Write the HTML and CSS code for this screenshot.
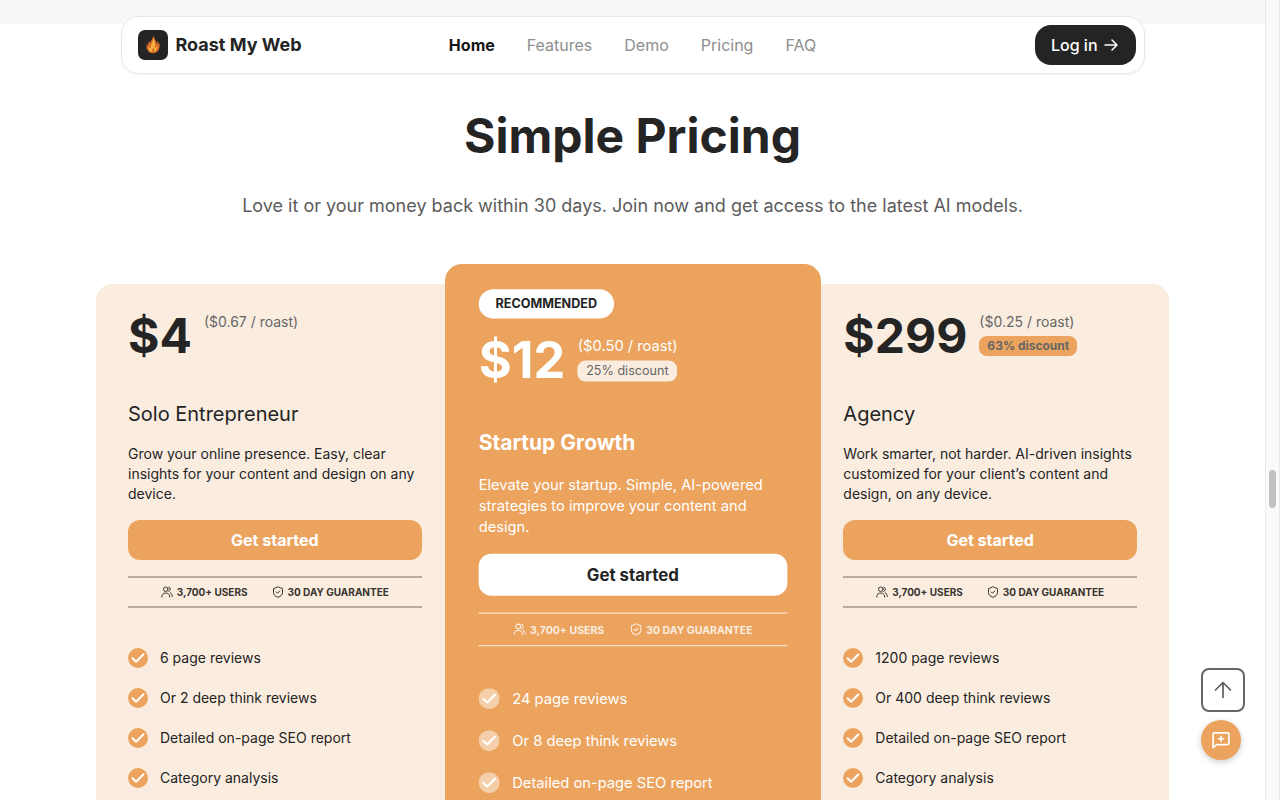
FILE: index.html
```html
<!DOCTYPE html>
<html lang="en">
<head>
<meta charset="utf-8">
<meta name="viewport" content="width=device-width, initial-scale=1">
<title>Roast My Web</title>
<link rel="stylesheet" href="styles.css">
</head>
<body>
<svg class="defs" aria-hidden="true">
  <symbol id="users" viewBox="0 0 24 24"><circle cx="9.500" cy="6.500" r="4.500"/><path d="M1.500 22c0-5 3.300-8 8-8s8 3 8 8M15.500 2.200a4.500 4.500 0 0 1 0 8.600M18.500 13.500c2.600 1.200 4 4 4 7.500"/></symbol>
  <symbol id="shield" viewBox="0 0 24 24"><path d="M21 13c0 5-3.500 7.500-8.700 9.500a1 1 0 0 1-.6 0C6.500 20.500 3 18 3 13V5.500a1 1 0 0 1 1-1c2.500 0 5-1.200 7.200-2.900a1.200 1.200 0 0 1 1.600 0C15 3.300 17.500 4.500 20 4.500a1 1 0 0 1 1 1z"/><path d="m8.500 12 2.500 2.500 4.500-4.500"/></symbol>
  <symbol id="check" viewBox="0 0 20 20"><circle class="disc" cx="10" cy="10" r="10"/><path class="tick" d="m4.500 10.200 3.600 3.500 7.400-7.500"/></symbol>
</svg>
<div class="page">
  <div class="band"></div>
  <header class="header">
    <a class="brand" href="#">
      <svg class="logo" viewBox="0 0 30 30" aria-hidden="true">
        <rect width="30" height="30" rx="7" fill="#242424"/>
        <path fill="#d9692b" d="M15.500 5.500c.5 3.200 3.100 5 2.900 8.600.7-.9.9-2 .6-3.400 1.300 1 1.700 2.300 1.700 3.600.5-.3.7-.8.8-1.400.9 5.500-1.500 10.300-6.500 10.300-4.800 0-7.300-4.200-6.300-9.300.4.900.8 1.300 1.400 1.500-.2-1.800.1-3.100 1.100-4.400.1 1.100.4 1.800 1 2.200.3-2.800 2.700-4.600 3.300-7.700z"/>
        <path fill="#f4b23f" d="M15.500 7.500c.1 3.100 2.100 4.300 1.600 7.500l-.5 3c1.300-.5 2.200-1.300 2.700-2.700.5 3.100-.9 5.900-3.600 6.700.7-1.700.5-3-.4-4.400-.2 1.600-1.700 2.400-1.400 4.500-2.500-.7-3.800-2.900-3.200-5.800.5 1.200 1.200 1.800 2.200 2.100-.7-4.500 2.500-6.100 2.600-10.900z"/>
      </svg>
      <span>Roast My Web</span>
    </a>
    <nav class="nav">
      <a class="active" href="#">Home</a>
      <a href="#features">Features</a>
      <a href="#demo">Demo</a>
      <a href="#pricing">Pricing</a>
      <a href="#faq">FAQ</a>
    </nav>
    <button class="login" type="button">Log in
      <svg class="line" viewBox="0 0 16 16" aria-hidden="true"><path d="M2 8h12M9 3l5 5-5 5"/></svg>
    </button>
  </header>

  <main class="pricing" id="pricing">
    <h1>Simple Pricing</h1>
    <p class="lead">Love it or your money back within 30 days. Join now and get access to the latest AI models.</p>
    <div class="plans">
      <section class="plan first">
        <div class="price"><strong>$4</strong><div class="rate"><span>($0.67 / roast)</span></div></div>
        <h2>Solo Entrepreneur</h2>
        <p class="about">Grow your online presence. Easy, clear insights for your content and design on any device.</p>
        <button class="start" type="button">Get started</button>
        <div class="trust">
          <span><svg class="line"><use href="#users"/></svg>3,700+ USERS</span>
          <span><svg class="line"><use href="#shield"/></svg>30 DAY GUARANTEE</span>
        </div>
        <ul class="features">
          <li><svg><use href="#check"/></svg>6 page reviews</li>
          <li><svg><use href="#check"/></svg>Or 2 deep think reviews</li>
          <li><svg><use href="#check"/></svg>Detailed on-page SEO report</li>
          <li><svg><use href="#check"/></svg>Category analysis</li>
        </ul>
      </section>

      <section class="plan featured">
        <span class="badge">RECOMMENDED</span>
        <div class="price"><strong>$12</strong><div class="rate"><span>($0.50 / roast)</span><span class="discount">25% discount</span></div></div>
        <h2>Startup Growth</h2>
        <p class="about">Elevate your startup. Simple, AI-powered strategies to improve your content and design.</p>
        <button class="start" type="button">Get started</button>
        <div class="trust">
          <span><svg class="line"><use href="#users"/></svg>3,700+ USERS</span>
          <span><svg class="line"><use href="#shield"/></svg>30 DAY GUARANTEE</span>
        </div>
        <ul class="features">
          <li><svg><use href="#check"/></svg>24 page reviews</li>
          <li><svg><use href="#check"/></svg>Or 8 deep think reviews</li>
          <li><svg><use href="#check"/></svg>Detailed on-page SEO report</li>
        </ul>
      </section>

      <section class="plan last">
        <div class="price"><strong>$299</strong><div class="rate"><span>($0.25 / roast)</span><span class="discount">63% discount</span></div></div>
        <h2>Agency</h2>
        <p class="about">Work smarter, not harder. AI-driven insights customized for your client’s content and design, on any device.</p>
        <button class="start" type="button">Get started</button>
        <div class="trust">
          <span><svg class="line"><use href="#users"/></svg>3,700+ USERS</span>
          <span><svg class="line"><use href="#shield"/></svg>30 DAY GUARANTEE</span>
        </div>
        <ul class="features">
          <li><svg><use href="#check"/></svg>1200 page reviews</li>
          <li><svg><use href="#check"/></svg>Or 400 deep think reviews</li>
          <li><svg><use href="#check"/></svg>Detailed on-page SEO report</li>
          <li><svg><use href="#check"/></svg>Category analysis</li>
        </ul>
      </section>
    </div>
  </main>

  <div class="floating">
    <button class="to-top" type="button" aria-label="Back to top"><svg class="line" viewBox="0 0 24 24"><path d="M12 21V3M3 12l9-9 9 9"/></svg></button>
    <button class="feedback" type="button" aria-label="Send feedback"><svg class="line" viewBox="0 0 24 24"><path d="M21.500 16a1.500 1.500 0 0 1-1.500 1.500H7L2.500 21V5A1.500 1.500 0 0 1 4 3.500h16A1.500 1.500 0 0 1 21.500 5zM12 7.500v6M9 10.500h6"/></svg></button>
  </div>
</div>
<div class="scrollbar" aria-hidden="true"><div class="thumb"></div></div>
</body>
</html>
```
FILE: styles.css
```css
* { box-sizing: border-box; }

body {
  margin: 0;
  height: 100vh;
  display: grid;
  grid-template-columns: minmax(0, 1fr) 15px;
  overflow: hidden;
  background: #fff;
  color: #242424;
  font-family: Inter, "Liberation Sans", sans-serif;
  font-size: 14px;
  line-height: 20px;
}

h1, h2, p, ul { margin: 0; padding: 0; }
a { color: inherit; text-decoration: none; }
button { border: 0; padding: 0; font: inherit; cursor: pointer; }
.defs { position: absolute; width: 0; height: 0; }
.line { fill: none; stroke: currentColor; stroke-width: 2; stroke-linecap: round; stroke-linejoin: round; }

.page {
  position: relative;
  display: flex;
  flex-direction: column;
  height: 100vh;
  overflow: hidden;
}
.band { flex: none; height: 24px; background: #f7f7f7; }

.header {
  position: absolute;
  top: 16px;
  left: 0;
  right: 0;
  z-index: 3;
  width: calc(100% - 32px);
  max-width: 1024px;
  margin: 0 auto;
  padding: 8px;
  display: grid;
  grid-template-columns: 1fr auto 1fr;
  align-items: center;
  background: #fff;
  border: 1px solid #e8e8e8;
  border-radius: 18px;
  box-shadow: 0 1px 2px rgba(0, 0, 0, .05);
}
.brand { display: flex; align-items: center; gap: 8px; padding-left: 8px; font-size: 18px; font-weight: 700; }
.logo { width: 30px; height: 30px; }
.nav { display: flex; gap: 32px; font-size: 16px; color: #8e8e8e; }
.nav .active { color: #151515; font-weight: 700; }
.login {
  justify-self: end;
  height: 40px;
  padding: 0 16px;
  display: flex;
  align-items: center;
  gap: 4px;
  border-radius: 16px;
  background: #242424;
  color: #fff;
  font-size: 16px;
  font-weight: 500;
}
.login svg { width: 18px; height: 16px; stroke-width: 1.5; }

.pricing {
  flex: 1;
  display: flex;
  flex-direction: column;
  padding: 88px 96px 0;
}
h1 { font-size: 48px; line-height: 48px; font-weight: 700; text-align: center; }
.lead { margin: 32px 0 64px; font-size: 18px; line-height: 28px; text-align: center; color: #5c5c5c; }

.plans { flex: 1; display: grid; grid-template-columns: repeat(3, minmax(0, 1fr)); }
.plan { padding: 28px 32px 0; background: #faede0; }
.first { border-top-left-radius: 16px; }
.last { border-top-right-radius: 16px; }
.featured {
  z-index: 1;
  margin-top: -20px;
  padding-top: 24px;
  border-radius: 16px 16px 0 0;
  background: #eba35e;
  color: #fff;
  transform: scale(1.05);
  transform-origin: top center;
}
.badge {
  display: block;
  width: fit-content;
  margin-bottom: 16px;
  padding: 4px 16px;
  border-radius: 14px;
  background: #fff;
  color: #242424;
  font-size: 12px;
  font-weight: 700;
}

.price { display: flex; gap: 12px; height: 48px; margin-bottom: 40px; }
.price strong { font-size: 48px; line-height: 48px; font-weight: 700; }
.rate { display: flex; flex-direction: column; align-items: flex-start; gap: 4px; color: #666; }
.featured .rate { color: #fff; }
.discount { padding: 0 8px; border-radius: 8px; background: #eba35e; font-size: 12px; font-weight: 700; }
.featured .discount { background: #faede0; color: #666; font-weight: 400; }

h2 { margin-bottom: 16px; font-size: 20px; line-height: 28px; font-weight: 400; }
.featured h2 { font-weight: 700; }
.start {
  width: 100%;
  height: 40px;
  margin: 16px 0;
  border-radius: 12px;
  background: #eba35e;
  color: #fff;
  font-size: 16px;
  font-weight: 700;
}
.featured .start { background: #fff; color: #242424; }

.trust {
  display: flex;
  justify-content: center;
  gap: 24px;
  height: 32px;
  align-items: center;
  margin-bottom: 40px;
  border: solid #b9aba0;
  border-width: 2px 0;
  color: #38332f;
  font-size: 10px;
  font-weight: 700;
}
.trust span { display: flex; align-items: center; gap: 4px; }
.trust svg { width: 12px; height: 12px; }
.featured .trust { border-width: 1px 0; border-color: #faede0; color: #faede0; }

.features { --disc: #eba35e; display: flex; flex-direction: column; gap: 20px; list-style: none; }
.featured .features { --disc: #f5cfaa; }
.features li { display: flex; gap: 12px; }
.features svg { width: 20px; height: 20px; }
.disc { fill: var(--disc); }
.tick { fill: none; stroke: #fff; stroke-width: 2; stroke-linecap: round; stroke-linejoin: round; }

.floating {
  position: absolute;
  right: 20px;
  bottom: 40px;
  z-index: 4;
  display: flex;
  flex-direction: column;
  gap: 8px;
}
.floating button { display: grid; place-items: center; }
.to-top { width: 44px; height: 44px; border: 2px solid #666; border-radius: 8px; background: #fff; color: #5c5c5c; }
.to-top svg { width: 20px; height: 20px; }
.feedback {
  width: 40px;
  height: 40px;
  border-radius: 50%;
  background: #eba35e;
  color: #fff;
  box-shadow: 0 2px 6px rgba(0, 0, 0, .2);
}
.feedback svg { width: 20px; height: 20px; }

.scrollbar { padding: 470px 3px 0; background: #fafafa; border: solid #e8e8e8; border-width: 0 1px; }
.thumb { height: 38px; border-radius: 4px; background: #c1c1c1; }
```
